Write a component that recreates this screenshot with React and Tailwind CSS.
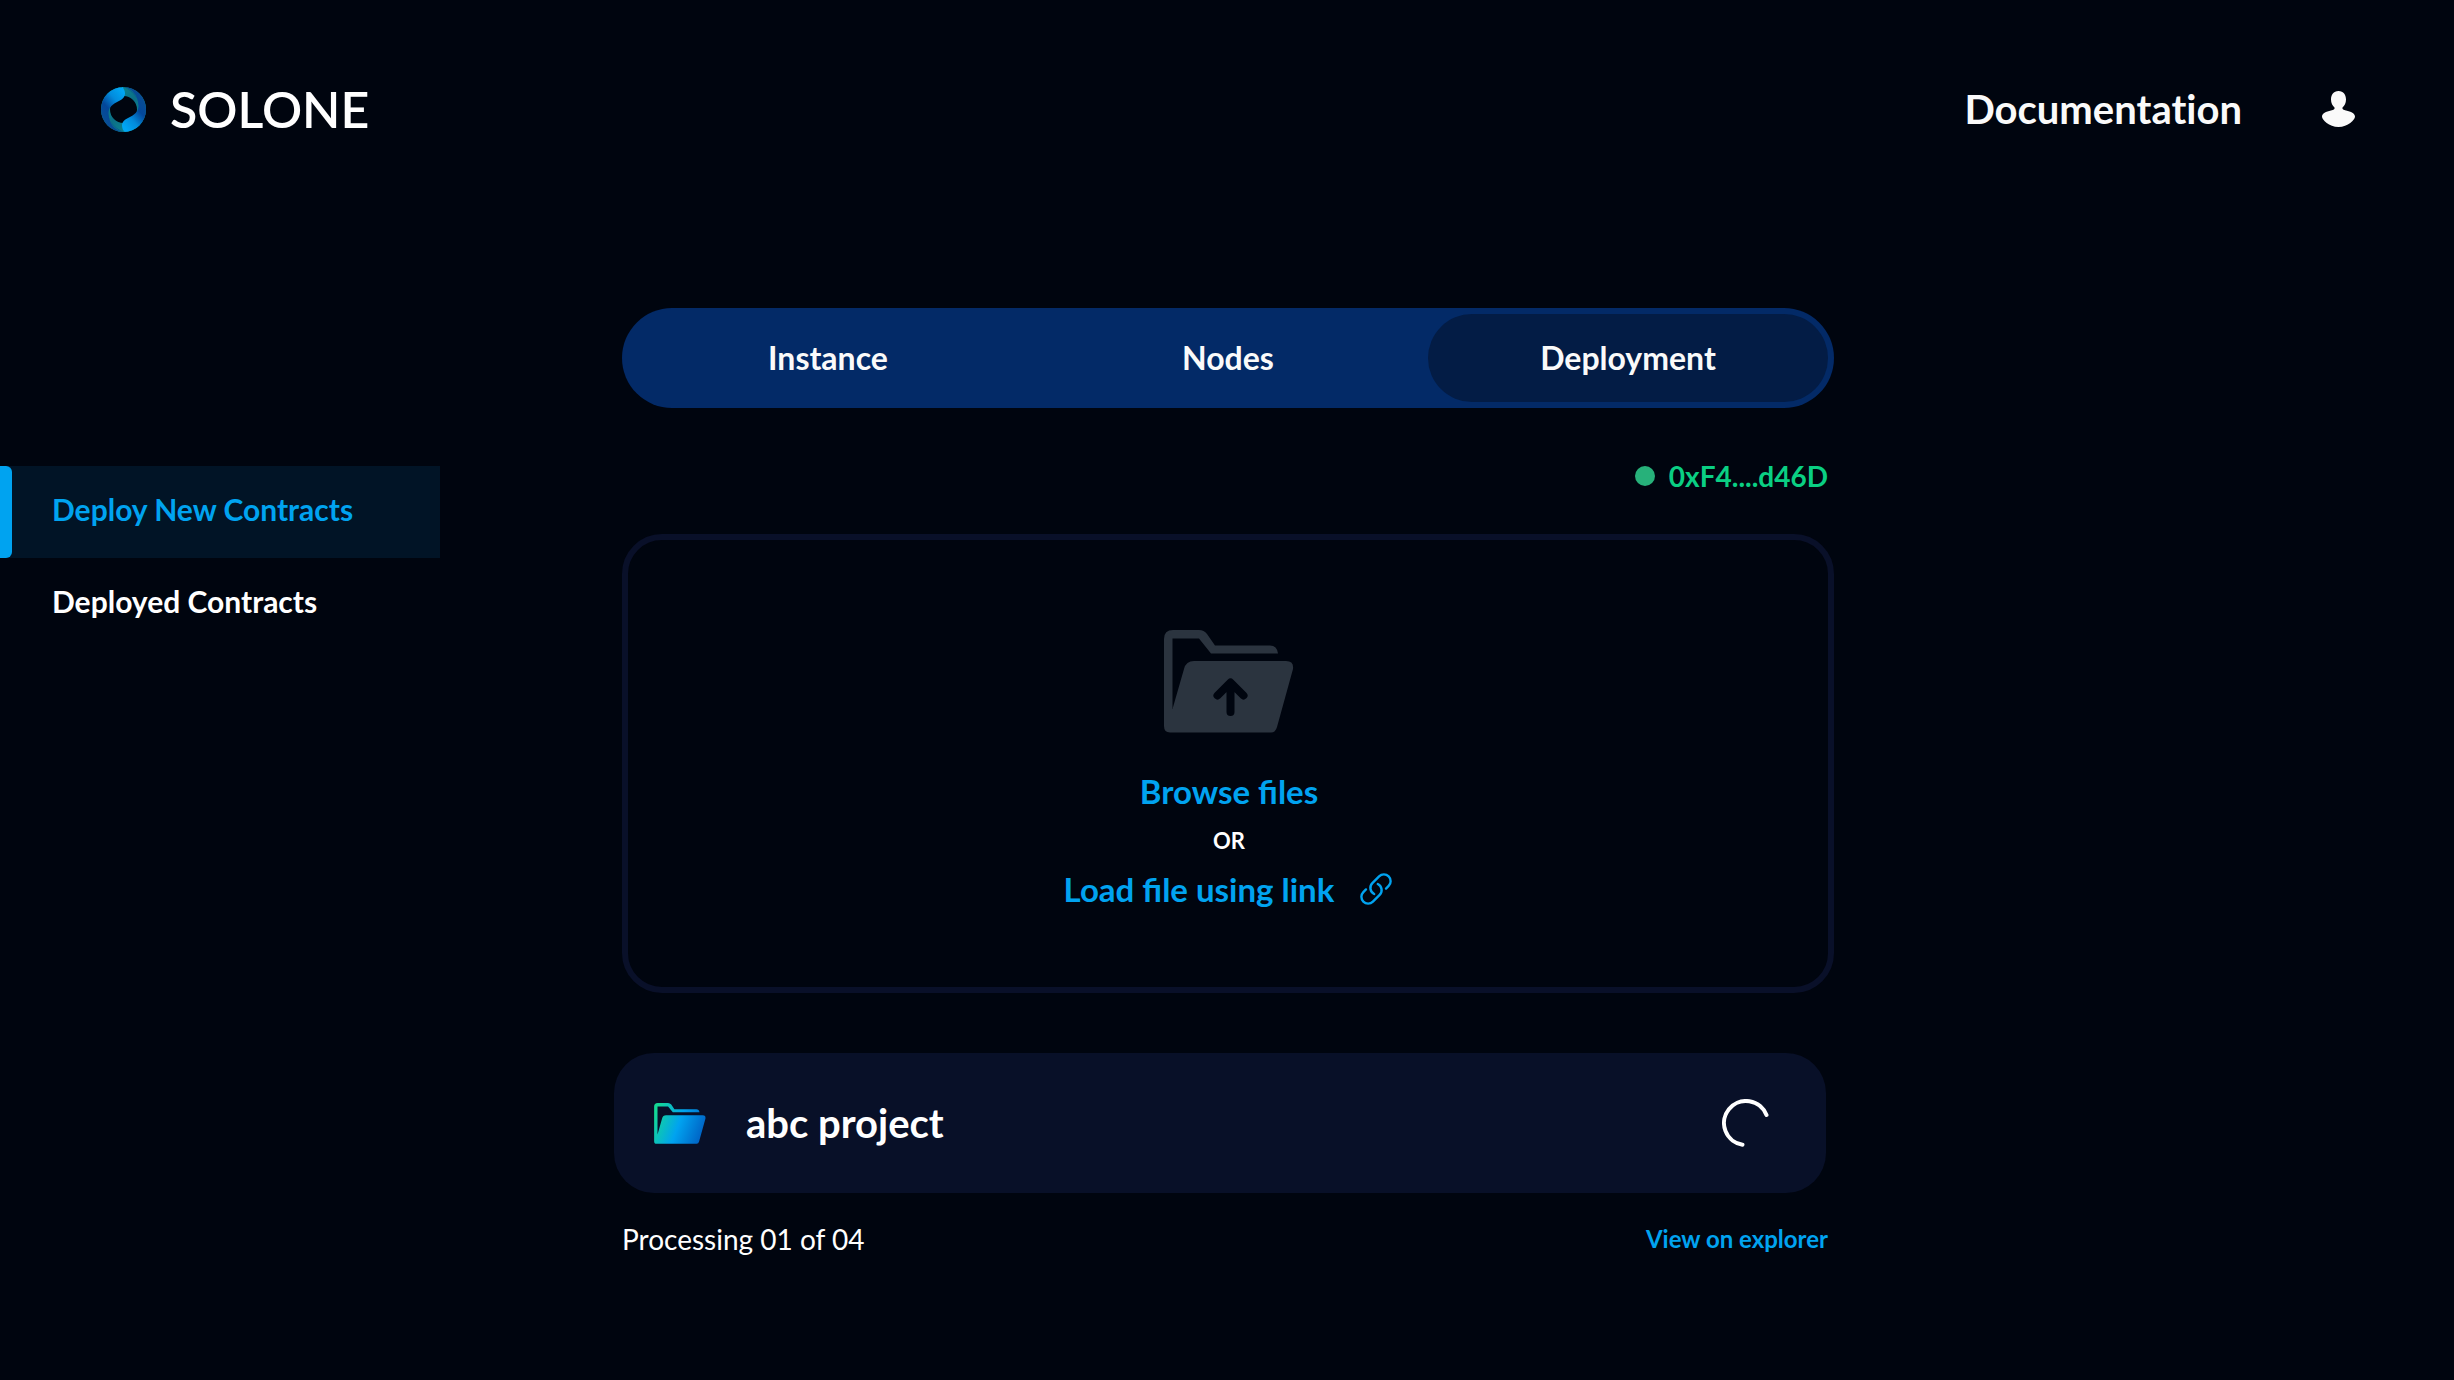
const FOLDER_PATH =
  "M0 96V9Q0 0 9 0H35Q40 0 43 4L51 15.500H106Q113 15.500 114 23.500H47L35 8.500H8.500V79L20 39Q22 31 30 31H122Q130 31 129 39L113 97Q111.500 102.500 107 102.500H6Q0 102.500 0 96Z";

const SWIRL_PATH =
  "M22.500 0A22.500 22.500 0 0 0 22.500 45C14 44 7.500 36 7.500 26C7.500 20 12 17 17 14.500C21 13 24 10 24 6.500C24 4 23 1.500 21 0Z";

function Logo() {
  return (
    <svg viewBox="0 0 45 45" className="size-[45px]" aria-hidden="true">
      <defs>
        <linearGradient id="swirl" x1="0.9" y1="0.1" x2="0.35" y2="1">
          <stop offset="0" stopColor="#00a6f4" />
          <stop offset="0.3" stopColor="#028bdc" />
          <stop offset="0.6" stopColor="#03479a" />
          <stop offset="1" stopColor="#0a4f92" />
        </linearGradient>
        <linearGradient id="ring" x1="0" y1="0" x2="1" y2="1">
          <stop offset="0" stopColor="#0b8f95" />
          <stop offset="0.5" stopColor="#0b6f86" />
          <stop offset="1" stopColor="#0b8f95" />
        </linearGradient>
      </defs>
      <circle cx="22.500" cy="22.500" r="18" fill="none" stroke="url(#ring)" strokeWidth="9" />
      <path
        d="M22.500 0C32 4 40 13 39 24C38.500 29 36 33 33 36A22.500 22.500 0 0 0 22.500 0Z"
        fill="#064a94"
      />
      <path
        d="M22.500 0C32 4 40 13 39 24C38.500 29 36 33 33 36A22.500 22.500 0 0 0 22.500 0Z"
        fill="#064a94"
        transform="rotate(180 22.500 22.500)"
      />
      <path d={SWIRL_PATH} fill="url(#swirl)" />
      <path d={SWIRL_PATH} fill="url(#swirl)" transform="rotate(180 22.500 22.500)" />
    </svg>
  );
}

function UserIcon() {
  return (
    <svg viewBox="0 0 33 36" className="h-9 w-[33px]" fill="#fafafa" aria-hidden="true">
      <path d="M16.500 0C21.500 0 24 4 24 8.500C24 12 22.500 15 20.500 16.500C20 18.500 21.500 19 24 19.500C29 20.500 33 22.500 33 25.500C33 29 26 36 16.500 36C7 36 0 29 0 25.500C0 22.500 4 20.500 9 19.500C11.500 19 13 18.500 12.500 16.500C10.500 15 9 12 9 8.500C9 4 11.500 0 16.500 0Z" />
    </svg>
  );
}

function UploadFolder() {
  return (
    <svg viewBox="0 0 130 103" className="h-[103px] w-[130px]" aria-hidden="true">
      <path d={FOLDER_PATH} fill="#2b343f" />
      <path
        d="M66.500 82V53M53.500 65.500L66.500 52.500L79.500 65.500"
        fill="none"
        stroke="#00050f"
        strokeWidth="8"
        strokeLinecap="round"
        strokeLinejoin="round"
      />
    </svg>
  );
}

function ProjectFolder() {
  return (
    <svg viewBox="0 0 130 103" className="h-[41px] w-[52px]" aria-hidden="true">
      <defs>
        <linearGradient id="project" x1="0" y1="0.3" x2="1" y2="0.6">
          <stop offset="0" stopColor="#14d895" />
          <stop offset="0.5" stopColor="#00a3f0" />
          <stop offset="1" stopColor="#0062c4" />
        </linearGradient>
      </defs>
      <path d={FOLDER_PATH} fill="url(#project)" />
    </svg>
  );
}

function LinkIcon() {
  return (
    <svg
      viewBox="0 0 24 24"
      className="size-9"
      fill="none"
      stroke="currentColor"
      strokeWidth="1.6"
      strokeLinecap="round"
      strokeLinejoin="round"
      aria-hidden="true"
    >
      <path d="M13.190 8.688a4.500 4.500 0 0 1 1.242 7.244l-4.500 4.500a4.500 4.500 0 0 1-6.364-6.364l1.757-1.757m13.350-.622 1.757-1.757a4.500 4.500 0 0 0-6.364-6.364l-4.500 4.500a4.500 4.500 0 0 0 1.242 7.244" />
    </svg>
  );
}

function Spinner() {
  return (
    <svg viewBox="0 0 48 48" className="size-12" role="img" aria-label="Processing">
      <path
        d="M44.500 16A22 22 0 1 0 20.500 45.700"
        fill="none"
        stroke="#fff"
        strokeWidth="4"
        strokeLinecap="round"
      />
    </svg>
  );
}

const tabs = ["Instance", "Nodes", "Deployment"];

export default function App() {
  return (
    <div className="min-h-screen bg-[#00050f] font-['Lato',sans-serif] font-bold text-white">
      <header className="flex h-[220px] items-center justify-between pr-[99px] pb-0.5 pl-[101px]">
        <a href="#home" className="flex items-center gap-6">
          <Logo />
          <span className="text-[50px] leading-none font-semibold">SOLONE</span>
        </a>
        <nav className="flex items-center gap-20">
          <a href="#docs" className="text-[40px] leading-none text-[#fafafa] [font-variant-ligatures:none]">
            Documentation
          </a>
          <button type="button" aria-label="Account">
            <UserIcon />
          </button>
        </nav>
      </header>

      <main className="grid grid-cols-[1fr_minmax(0,1212px)_1fr] pt-[88px] pb-24">
        <nav aria-label="Contracts" className="mt-[158px] flex max-w-[440px] flex-col text-[30px] leading-9">
          <a href="#deploy" aria-current="page" className="flex h-[92px] bg-[#011426] text-[#00a3f0]">
            <span className="w-3 rounded-r-md bg-[#00a3f0]" />
            <span className="self-center pb-1.5 pl-10">Deploy New Contracts</span>
          </a>
          <a href="#deployed" className="flex h-[92px] items-center pb-1.5 pl-[52px]">
            Deployed Contracts
          </a>
        </nav>

        <section className="-mr-px ml-px">
          <div role="tablist" className="grid grid-cols-3 rounded-full bg-[#032a67] p-1.5">
            {tabs.map((tab) => (
              <button
                key={tab}
                type="button"
                role="tab"
                aria-selected={tab === "Deployment"}
                className="h-[88px] rounded-full text-[32px] text-[#fafafa] aria-selected:bg-[#031c45]"
              >
                {tab}
              </button>
            ))}
          </div>

          <p className="mt-[50px] flex items-center justify-end gap-3.5 pr-1.5 text-[28px] leading-9 text-[#0acf83]">
            <span className="size-5 rounded-full bg-[#27b17a]" />
            0xF4....d46D
          </p>

          <div className="mt-10 flex flex-col items-center rounded-[40px] border-6 border-[#091029] pt-[90px] pb-[78px] pl-0.5">
            <UploadFolder />
            <button type="button" className="mt-[38px] text-[33px] leading-10 text-[#00a3f0]">
              Browse files
            </button>
            <span className="mt-3.5 text-[22px] leading-8">OR</span>
            <button type="button" className="mt-3 flex items-center gap-6 text-[33px] leading-10 text-[#00a3f0]">
              Load file using link
              <LinkIcon />
            </button>
          </div>

          <div className="mt-[60px] mr-2 -ml-2 flex h-[140px] items-center rounded-[40px] bg-[#081028] px-10">
            <ProjectFolder />
            <span className="ml-10 text-[40px]">abc project</span>
            <span className="mr-4 ml-auto">
              <Spinner />
            </span>
          </div>

          <div className="mt-7 flex items-center justify-between pr-1.5 leading-9">
            <span className="text-[28px] font-normal">Processing 01 of 04</span>
            <a href="#explorer" className="text-2xl leading-9 text-[#00a3f0]">
              View on explorer
            </a>
          </div>
        </section>
      </main>
    </div>
  );
}
